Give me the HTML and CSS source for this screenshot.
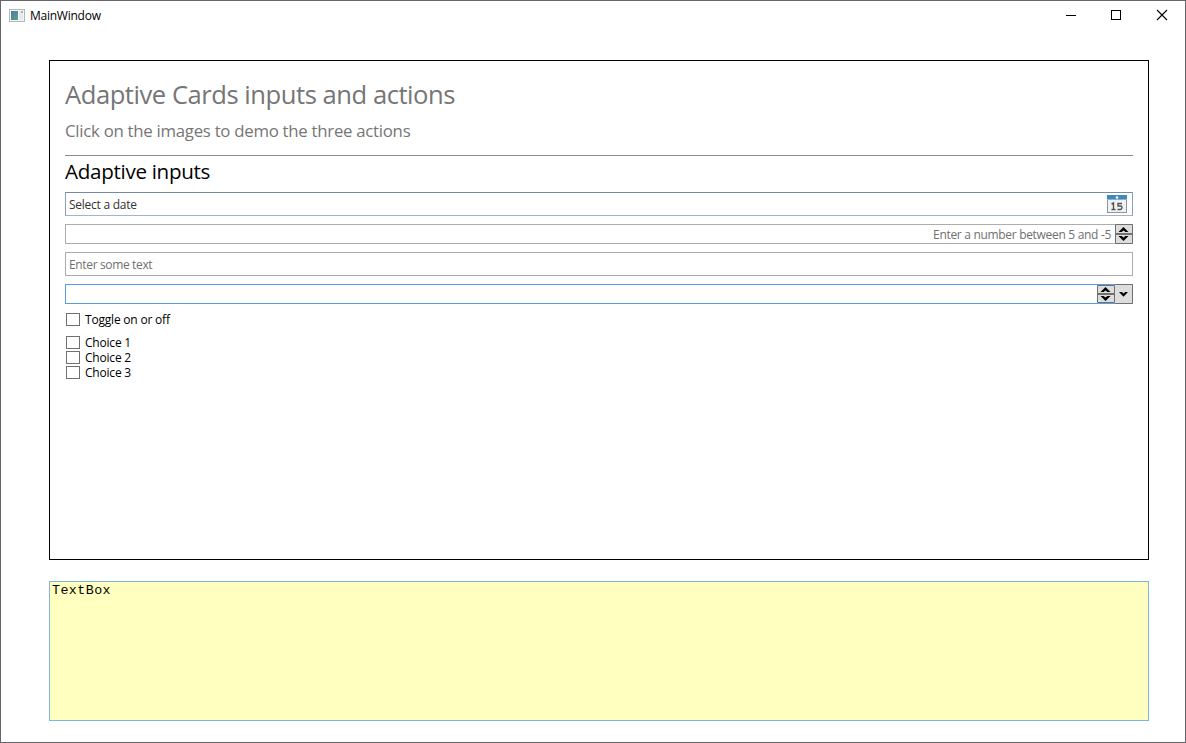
FILE: index.html
```html
<!DOCTYPE html>
<html lang="en">
<head>
<meta charset="utf-8">
<title>MainWindow</title>
<link rel="stylesheet" href="styles.css">
</head>
<body>
<div class="window">
  <header class="titlebar">
    <svg class="app-icon" width="16" height="14" viewBox="0 0 16 14">
      <defs><linearGradient id="pane" x1="0" y1="0" x2="1" y2="1"><stop offset="0" stop-color="#4d78a8"/><stop offset="1" stop-color="#58a583"/></linearGradient></defs>
      <rect x=".5" y=".5" width="15" height="12" fill="#f4f5f6" stroke="#b4b8bc"/>
      <rect x="2" y="2" width="7" height="9" fill="url(#pane)"/>
      <rect x="10" y="2" width="4" height="9" fill="#e4ebef"/>
      <rect x="12" y="2" width="2" height="2" fill="#91c6a4"/>
    </svg>
    <span class="caption">MainWindow</span>
    <svg class="control" width="46" height="30" viewBox="0 0 46 30"><path d="M18 14.500h10" stroke="#000"/></svg>
    <svg class="control" width="45" height="30" viewBox="0 0 45 30"><path d="M17.500 9.500h9v9h-9z" fill="none" stroke="#000" shape-rendering="crispEdges"/></svg>
    <svg class="control" width="46" height="30" viewBox="0 0 46 30"><path d="M18 9l10 10M28 9l-10 10" stroke="#000" stroke-width="1.100"/></svg>
  </header>
  <main class="content">
    <section class="card">
      <h1 class="title">Adaptive Cards inputs and actions</h1>
      <p class="subtitle">Click on the images to demo the three actions</p>
      <h2 class="heading">Adaptive inputs</h2>
      <div class="field date">
        <span>Select a date</span>
        <svg width="20" height="18" viewBox="0 0 20 18">
          <rect x=".5" y=".5" width="19" height="17" fill="#f1f1f1" stroke="#8f9499"/>
          <rect x="0" y="0" width="20" height="4" fill="#4288c0"/>
          <rect x="0" y="4" width="20" height="1" fill="#86b1d6"/>
          <circle cx="10" cy="2.500" r="1.300" fill="#fff"/>
          <path d="M4.500 9l2-1v7M4.500 14.500h4M15 8.500h-4v2.500h2.500q1.500 0 1.500 1.600t-1.500 1.900h-3" fill="none" stroke="#4f5458" stroke-width="1.400"/>
        </svg>
      </div>
      <div class="field number">
        <span class="hint">Enter a number between 5 and -5</span>
        <svg width="18" height="20" viewBox="0 0 18 20">
          <path d="M.5.500h17v19H.500z" fill="#ddd" stroke="#707070"/>
          <path d="M1 10h16" stroke="#707070" stroke-width="2"/>
          <path d="M8.500 3l5 5h-3.200L8.500 6.500 6.700 8H3.500zM8.500 17l-5-5h3.200l1.800 1.500 1.800-1.500h3.200z"/>
        </svg>
      </div>
      <div class="field text"><span>Enter some text</span></div>
      <div class="field time">
        <svg width="18" height="20" viewBox="0 0 18 20">
          <path d="M.5 1.500h17v17H.500z" fill="#ddd" stroke="#707070"/>
          <path d="M0 .5h18M0 19.500h18" stroke="#569de5"/>
          <path d="M1 10h16" stroke="#707070" stroke-width="2"/>
          <path d="M8.500 3l5 5h-3.200L8.500 6.500 6.700 8H3.500zM8.500 17l-5-5h3.200l1.800 1.500 1.800-1.500h3.200z"/>
        </svg>
        <svg width="18" height="20" viewBox="0 0 18 20">
          <path d="M-.5.500h18v19h-18z" fill="#ddd" stroke="#707070"/>
          <path d="M8.500 12.700L4 8h2.800l1.700 1.400L10.200 8H13z"/>
        </svg>
      </div>
      <label class="check toggle"><i class="box"></i><span>Toggle on or off</span></label>
      <label class="check"><i class="box"></i><span>Choice 1</span></label>
      <label class="check"><i class="box"></i><span>Choice 2</span></label>
      <label class="check"><i class="box"></i><span>Choice 3</span></label>
    </section>
    <section class="output">TextBox</section>
  </main>
</div>
</body>
</html>
```
FILE: styles.css
```css
* { box-sizing: border-box; }
body {
  margin: 0;
  font: 12px/15px "Open Sans", "Noto Sans", sans-serif;
  letter-spacing: -.2px;
  color: #000;
}
svg { display: block; flex: none; }
.window {
  width: 1186px;
  height: 743px;
  background: #fff;
  border: 1px solid #66666a;
  overflow: hidden;
}
.titlebar {
  display: flex;
  height: 30px;
  padding-left: 8px;
}
.app-icon { margin-top: 8px; }
.caption { flex: 1; padding-left: 5px; line-height: 29px; letter-spacing: -.25px; }
.content { padding: 29px 36px 0 48px; }
.card {
  height: 500px;
  padding: 15px 15px 0;
  border: 1px solid #000;
}
.title {
  margin: 0;
  font-size: 25.6px;
  font-weight: 400;
  line-height: 38px;
  letter-spacing: -.47px;
  color: #767676;
}
.subtitle {
  margin: 5px 0 0;
  height: 36px;
  font-size: 16.8px;
  line-height: 24px;
  letter-spacing: -.27px;
  color: #767676;
}
.heading {
  margin: 0 0 4px;
  height: 33px;
  border-top: 1px solid #8c8c8c;
  font-size: 20.6px;
  font-weight: 400;
  line-height: 31px;
  letter-spacing: -.3px;
}
.field {
  display: flex;
  align-items: center;
  height: 24px;
  margin-bottom: 8px;
  padding-left: 3px;
  border: 1px solid #abadb3;
  color: #707070;
}
.date {
  justify-content: space-between;
  padding-right: 5px;
  border-color: #738ba3 #8aa0b8 #a4b4c6;
  color: #333;
  letter-spacing: -.25px;
}
.text { letter-spacing: -.35px; }
.hint { letter-spacing: -.31px; }
.number, .time { height: 20px; justify-content: flex-end; }
.number svg, .time svg:last-child { margin-right: -1px; }
.number svg { margin-left: 4px; }
.time { border-color: #569de5; }
.check {
  display: flex;
  align-items: center;
  height: 15px;
  padding-left: 1px;
}
.toggle { margin-bottom: 8px; }
.box {
  width: 14px;
  height: 13px;
  margin-right: 5px;
  border: 1px solid #707070;
}
.output {
  height: 140px;
  margin-top: 21px;
  padding: 0 2px;
  border: 1px solid #7eb4ea;
  background: #ffffc0;
  font: 13.3px/17px "Liberation Mono", monospace;
  letter-spacing: .45px;
}
```
